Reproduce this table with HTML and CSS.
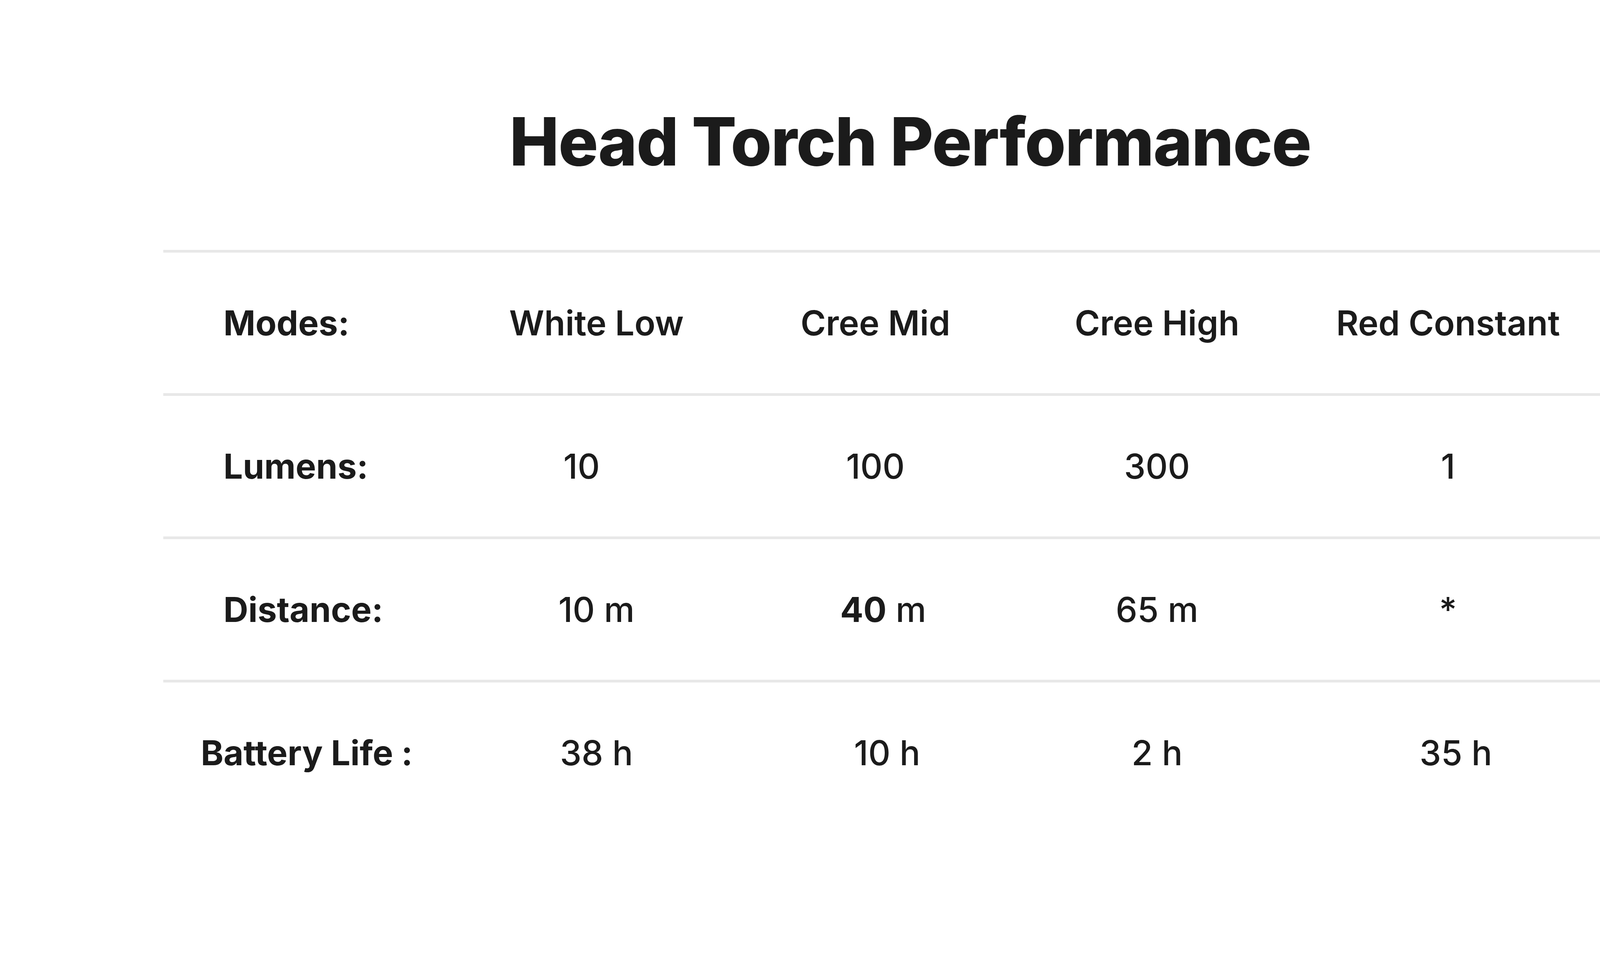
FILE: index.html
```html
<!DOCTYPE html>
<html lang="en">
<head>
<meta charset="utf-8">
<title>Head Torch Performance</title>
<link rel="stylesheet" href="styles.css">
</head>
<body>
<main class="page">
  <h1 class="title">Head Torch Performance</h1>
  <div class="specs">
    <div class="row">
      <div class="cell label">Modes:</div>
      <div class="cell head">White Low</div>
      <div class="cell head">Cree Mid</div>
      <div class="cell head">Cree High</div>
      <div class="cell head">Red Constant</div>
    </div>
    <div class="row">
      <div class="cell label">Lumens:</div>
      <div class="cell value shift-l2">10</div>
      <div class="cell value">100</div>
      <div class="cell value">300</div>
      <div class="cell value">1</div>
    </div>
    <div class="row">
      <div class="cell label">Distance:</div>
      <div class="cell value">10 m</div>
      <div class="cell value shift-r1"><strong class="strong">40</strong> m</div>
      <div class="cell value">65 m</div>
      <div class="cell value">*</div>
    </div>
    <div class="row">
      <div class="cell label label--wide">Battery Life :</div>
      <div class="cell value">38 h</div>
      <div class="cell value shift-r2">10 h</div>
      <div class="cell value">2 h</div>
      <div class="cell value shift-r1">35 h</div>
    </div>
  </div>
</main>
</body>
</html>
```

FILE: styles.css
```css
html, body {
  margin: 0;
  padding: 0;
  background: #ffffff;
}

body {
  font-family: Inter, "Noto Sans", "Liberation Sans", sans-serif;
  color: #1b1b1b;
}

.page {
  margin-left: 418px;
  width: 3824px;
  padding-top: 260px;
}

.title {
  margin: 0 0 174px 0;
  font-size: 170px;
  font-weight: 800;
  line-height: 1.21;
  text-align: center;
  letter-spacing: -2px;
}

.specs {
  display: flex;
  flex-direction: column;
}

.row {
  display: grid;
  grid-template-columns: 750px 718px 710px 732px 758px;
  height: 360px;
  border-top: 7px solid #e8e8e8;
  align-items: center;
}

.cell {
  font-size: 88px;
  line-height: 1;
  text-align: center;
  white-space: nowrap;
}

.label {
  text-align: left;
  padding-left: 154px;
  font-weight: 700;
}

.label--wide {
  padding-left: 96px;
}

.head {
  font-weight: 600;
}

.value {
  font-weight: 500;
}

.strong {
  font-weight: 700;
}

.shift-l2 {
  padding-right: 76px;
}

.shift-r1 {
  padding-left: 40px;
}

.shift-r2 {
  padding-left: 60px;
}
```
